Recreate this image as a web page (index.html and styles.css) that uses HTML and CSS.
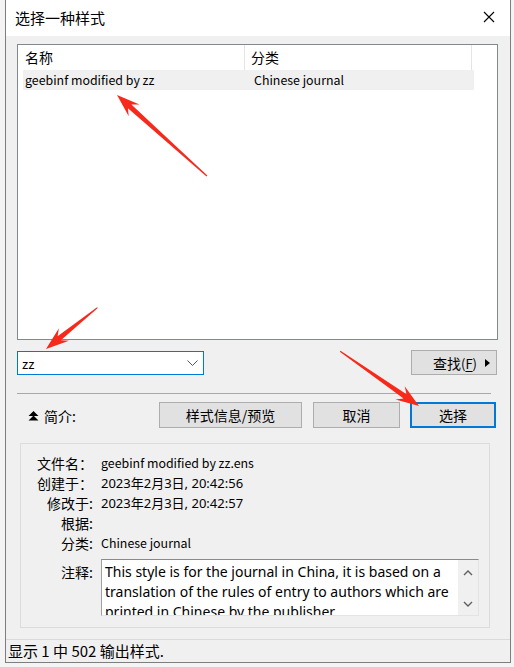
FILE: index.html
```html
<!DOCTYPE html>
<html lang="zh-CN">
<head>
    <meta charset="UTF-8">
    <title>选择一种样式</title>
    <link rel="stylesheet" href="styles.css">
</head>
<body>

    <div class="window">
        <div class="titlebar">
            <span class="title">选择一种样式</span>
            <svg class="close" width="12" height="12" viewBox="0 0 12 12">
                <path d="M1 1 L11 11 M11 1 L1 11" stroke="#000" stroke-width="1.1" fill="none"/>
            </svg>
        </div>

        <div class="content">
            <div class="listbox">
                <div class="list-head">
                    <div class="col col-name">名称</div>
                    <div class="col col-cat">分类</div>
                </div>
                <div class="list-row selected">
                    <div class="col col-name">geebinf modified by zz</div>
                    <div class="col col-cat">Chinese journal</div>
                </div>
            </div>

            <div class="search-row">
                <div class="combo">
                    <span>zz</span>
                    <svg class="chevron" width="11" height="6" viewBox="0 0 11 6">
                        <path d="M0.5 0.5 L5.5 5.5 L10.5 0.5" stroke="#555" stroke-width="1" fill="none"/>
                    </svg>
                </div>
                <button class="btn btn-find">
                    <span>查找<span class="mnem">(<u>F</u>)</span></span>
                    <svg class="tri" width="5" height="8" viewBox="0 0 5 8"><path d="M0 0 L5 4 L0 8 Z" fill="#000"/></svg>
                </button>
            </div>

            <div class="sep"></div>

            <div class="action-row">
                <div class="toggle">
                    <svg width="11" height="11" viewBox="0 0 11 11">
                        <path d="M5.5 0 L10.5 5 L0.5 5 Z M5.5 4.5 L10.5 9.5 L0.5 9.5 Z" fill="#000"/>
                    </svg>
                    <span>简介:</span>
                </div>
                <button class="btn btn-preview">样式信息/预览</button>
                <button class="btn btn-cancel">取消</button>
                <button class="btn btn-select">选择</button>
            </div>

            <div class="info">
                <div class="info-grid">
                    <div class="label">文件名：</div><div class="value">geebinf modified by zz.ens</div>
                    <div class="label">创建于：</div><div class="value date">2023年2月3日, 20:42:56</div>
                    <div class="label">修改于:</div><div class="value date">2023年2月3日, 20:42:57</div>
                    <div class="label">根据:</div><div class="value"></div>
                    <div class="label">分类:</div><div class="value">Chinese journal</div>
                </div>
                <div class="notes-row">
                    <div class="label">注释:</div>
                    <div class="notes">
                        <div class="notes-text">This style is for the journal in China, it is based on a translation of the rules of entry to authors which are printed in Chinese by the publisher.</div>
                        <div class="scroll">
                            <svg width="10" height="6" viewBox="0 0 10 6"><path d="M1 5 L5 1 L9 5" stroke="#606060" stroke-width="1.4" fill="none"/></svg>
                            <svg width="10" height="6" viewBox="0 0 10 6"><path d="M1 1 L5 5 L9 1" stroke="#606060" stroke-width="1.4" fill="none"/></svg>
                        </div>
                    </div>
                </div>
            </div>
        </div>

        <div class="statusbar">显示 1 中 502 输出样式.</div>
    </div>

    <svg class="annotations" width="514" height="667" viewBox="0 0 514 667">
        <g fill="#f6291b">
            <polygon transform="translate(117 95) rotate(-138)" points="-121,-0.6 -17,-2.6 -23,-8 0,0 -23,8 -17,2.6 -121,0.6"/>
            <polygon transform="translate(46 349) rotate(141.2)" points="-66,-0.6 -17,-2.6 -23,-8 0,0 -23,8 -17,2.6 -66,0.6"/>
            <polygon transform="translate(419 406) rotate(34.8)" points="-96,-0.6 -17,-2.6 -23,-8 0,0 -23,8 -17,2.6 -96,0.6"/>
        </g>
    </svg>

</body>
</html>
```

FILE: styles.css
```css
body {
    margin: 0;
    width: 514px;
    height: 667px;
    overflow: hidden;
    position: relative;
    background-color: #f4f4f4;
    font-family: "Noto Sans CJK SC", "Noto Sans", sans-serif;
    color: #000;
}
.window {
    width: 506px;
    height: 663px;
    margin-left: 5px;
    box-sizing: border-box;
    border: 1px solid #7e7e7e;
    border-top: none;
    background-color: #f0f0f0;
    display: flex;
    flex-direction: column;
}
.titlebar {
    height: 36px;
    background-color: #fff;
    display: flex;
    align-items: center;
    justify-content: space-between;
    padding: 0 15px 0 9px;
    flex-shrink: 0;
}
.title {
    font-size: 15px;
    line-height: 20px;
}
.close {
    margin-top: -2px;
}
.content {
    flex: 1;
}
.listbox {
    width: 481px;
    height: 296px;
    margin: 8px 0 0 11px;
    box-sizing: border-box;
    border: 1px solid #828790;
    background-color: #fff;
}
.list-head,
.list-row {
    display: flex;
    width: 456px;
}
.list-head {
    height: 25px;
    align-items: center;
    font-size: 14px;
}
.list-head .col {
    height: 25px;
    line-height: 25px;
    border-right: 1px solid #e5e5e5;
}
.list-head .col-name {
    width: 219px;
    padding-left: 7px;
}
.list-head .col-cat {
    width: 220px;
    padding-left: 6px;
}
.list-row {
    height: 20px;
    line-height: 20px;
    font-size: 12.4px;
    margin-left: 5px;
    width: 451px;
}
.list-row.selected {
    background-color: #f0f0f0;
}
.list-row .col-name {
    width: 227px;
    padding-left: 2px;
}
.list-row .col-cat {
    padding-left: 2px;
}
.search-row {
    display: flex;
    justify-content: space-between;
    align-items: flex-start;
    margin-top: 10px;
    padding: 0 13px 0 11px;
}
.combo {
    width: 187px;
    height: 24px;
    margin-top: 1px;
    box-sizing: border-box;
    border: 1px solid #0078d7;
    background-color: #fff;
    display: flex;
    align-items: center;
    justify-content: space-between;
    padding: 0 5px 0 4px;
    font-size: 13px;
}
.btn {
    font-family: inherit;
    font-size: 14px;
    color: #000;
    background-color: #e1e1e1;
    border: 1px solid #adadad;
    border-radius: 0;
    padding: 0;
    height: 26px;
    box-sizing: border-box;
}
.btn-find {
    width: 86px;
    height: 25px;
    display: flex;
    align-items: center;
    justify-content: flex-end;
    padding-right: 6px;
    gap: 8px;
}
.mnem {
    font-size: 13px;
}
.btn-find u {
    text-underline-offset: 2px;
}
.sep {
    width: 474px;
    height: 1px;
    margin: 18px 0 0 11px;
    background-color: #a9a9a9;
}
.action-row {
    display: flex;
    align-items: center;
    margin-top: 8px;
    padding-left: 22px;
}
.toggle {
    width: 131px;
    display: flex;
    align-items: center;
    gap: 5px;
    font-size: 14px;
    margin-top: 2px;
}
.btn-preview {
    width: 143px;
}
.btn-cancel {
    width: 87px;
    margin-left: 11px;
}
.btn-select {
    width: 86px;
    margin-left: 10px;
    border: 2px solid #0078d7;
}
.info {
    width: 470px;
    height: 185px;
    margin: 15px 0 0 14px;
    box-sizing: border-box;
    border: 1px solid #dcdcdc;
    padding-top: 9px;
}
.info-grid {
    display: grid;
    grid-template-columns: 72px 1fr;
    column-gap: 8px;
    grid-auto-rows: 20px;
    line-height: 20px;
}
.label {
    text-align: right;
    font-size: 14px;
}
.value {
    font-size: 12.4px;
}
.value.date {
    font-family: "Noto Sans", "Noto Sans CJK SC", sans-serif;
    font-size: 13px;
}
.notes-row {
    display: grid;
    grid-template-columns: 72px 378px;
    column-gap: 8px;
    margin-top: 6px;
}
.notes-row .label {
    line-height: 20px;
    padding-top: 3px;
}
.notes {
    height: 57px;
    box-sizing: border-box;
    border-top: 1px solid #8a8a8a;
    border-left: 1px solid #a0a0a0;
    border-right: 1px solid #e3e3e3;
    border-bottom: 1px solid #e3e3e3;
    background-color: #fff;
    display: flex;
    overflow: hidden;
}
.notes-text {
    flex: 1;
    padding: 2px 0 0 3px;
    font-family: "Noto Sans", sans-serif;
    font-size: 14px;
    line-height: 20px;
}
.scroll {
    width: 20px;
    background-color: #f0f0f0;
    display: flex;
    flex-direction: column;
    justify-content: space-between;
    align-items: center;
    padding: 10px 0 8px;
    box-sizing: border-box;
}
.statusbar {
    margin-top: auto;
    height: 22px;
    border-top: 1px solid #dadada;
    padding-left: 2px;
    font-size: 15px;
    line-height: 21px;
}
.annotations {
    position: absolute;
    top: 0;
    left: 0;
    pointer-events: none;
}
```
